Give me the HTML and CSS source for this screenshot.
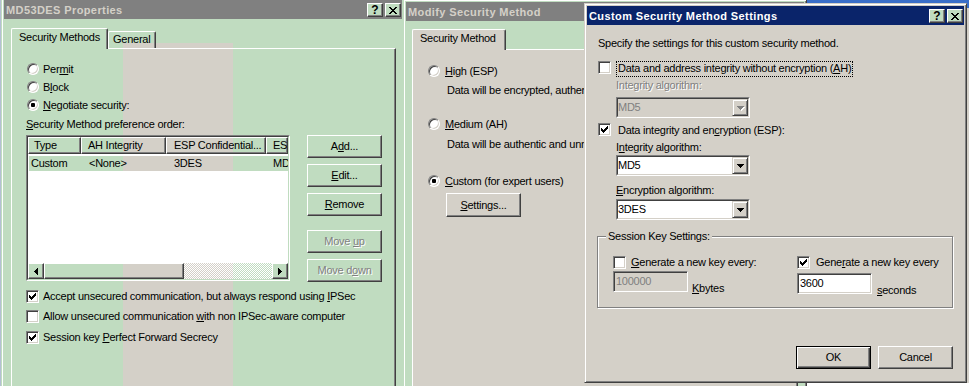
FILE: index.html
```html
<!DOCTYPE html>
<html lang="en">
<head>
<meta charset="utf-8">
<title>IPSec security method properties</title>
<link rel="stylesheet" href="styles.css">
</head>
<body>
<div class="desk">

  <div class="win w1">
    <div class="cap off">
      <span class="cap-t">MD53DES Properties</span>
      <span class="cap-b">
        <i class="tb">?</i>
        <i class="tb"><svg width="8" height="7" viewBox="0 0 8 7" shape-rendering="crispEdges"><path d="M0 0h2v1H0zM6 0h2v1H6zM1 1h2v1H1zM5 1h2v1H5zM2 2h4v1H2zM3 3h2v1H3zM2 4h4v1H2zM1 5h2v1H1zM5 5h2v1H5zM0 6h2v1H0zM6 6h2v1H6z"/></svg></i>
      </span>
    </div>
    <div class="body b1">
      <div class="tabs">
        <div class="tab sel t-sm">Security Methods</div>
        <div class="tab t-gen">General</div>
      </div>
      <div class="page p1">
        <div class="opt"><i class="rad"></i><span class="ol">Per<u>m</u>it</span></div>
        <div class="opt"><i class="rad"></i><span class="ol">B<u>l</u>ock</span></div>
        <div class="opt"><i class="rad on"></i><span class="ol"><u>N</u>egotiate security:</span></div>
        <div class="plabel"><u>S</u>ecurity Method preference order:</div>
        <div class="lvrow">
          <div class="lv">
            <div class="lv-in">
              <div class="lvh">
                <span class="hc h1">Type</span>
                <span class="hc h2">AH Integrity</span>
                <span class="hc h3">ESP Confidential...</span>
                <span class="hc h4">ESP Integrity</span>
              </div>
              <div class="lvr">
                <span class="rc r1">Custom</span>
                <span class="rc r2">&lt;None&gt;</span>
                <span class="rc r3">3DES</span>
                <span class="rc r4">MD5</span>
              </div>
              <div class="lvsp"></div>
              <div class="hsb">
                <i class="sbb"><svg width="4" height="7" viewBox="0 0 4 7" shape-rendering="crispEdges"><path d="M3 0h1v7H3zM2 1h1v5H2zM1 2h1v3H1zM0 3h1v1H0z"/></svg></i>
                <i class="thumb"></i>
                <i class="track"></i>
                <i class="sbb"><svg width="4" height="7" viewBox="0 0 4 7" shape-rendering="crispEdges"><path d="M0 0h1v7H0zM1 1h1v5H1zM2 2h1v3H2zM3 3h1v1H3z"/></svg></i>
              </div>
            </div>
          </div>
          <div class="btncol">
            <div class="btn"><span>A<u>d</u>d...</span></div>
            <div class="btn mt6"><span><u>E</u>dit...</span></div>
            <div class="btn mt6"><span><u>R</u>emove</span></div>
            <div class="btn dis mt14"><span>Move <u>u</u>p</span></div>
            <div class="btn dis mt6"><span>Move d<u>o</u>wn</span></div>
          </div>
        </div>
        <div class="chk k1"><i class="cb"><svg width="7" height="7" viewBox="0 0 7 7" shape-rendering="crispEdges"><path d="M6 0h1v1H6zM5 1h2v1H5zM0 2h1v1H0zM4 2h3v1H4zM0 3h2v1H0zM3 3h3v1H3zM0 4h5v1H0zM1 5h3v1H1zM2 6h1v1H2z"/></svg></i><span class="cl">Accept unsecured communication, but always respond using <u>I</u>PSec</span></div>
        <div class="chk k2"><i class="cb"></i><span class="cl">Allow unsecured communication <u>w</u>ith non IPSec-aware computer</span></div>
        <div class="chk k3"><i class="cb"><svg width="7" height="7" viewBox="0 0 7 7" shape-rendering="crispEdges"><path d="M6 0h1v1H6zM5 1h2v1H5zM0 2h1v1H0zM4 2h3v1H4zM0 3h2v1H0zM3 3h3v1H3zM0 4h5v1H0zM1 5h3v1H1zM2 6h1v1H2z"/></svg></i><span class="cl">Session key <u>P</u>erfect Forward Secrecy</span></div>
      </div>
    </div>
  </div>

  <div class="win w2">
    <div class="cap off">
      <span class="cap-t">Modify Security Method</span>
      <span class="cap-b">
        <i class="tb">?</i>
        <i class="tb"><svg width="8" height="7" viewBox="0 0 8 7" shape-rendering="crispEdges"><path d="M0 0h2v1H0zM6 0h2v1H6zM1 1h2v1H1zM5 1h2v1H5zM2 2h4v1H2zM3 3h2v1H3zM2 4h4v1H2zM1 5h2v1H1zM5 5h2v1H5zM0 6h2v1H0zM6 6h2v1H6z"/></svg></i>
      </span>
    </div>
    <div class="body b2">
      <div class="tabs">
        <div class="tab sel t-sec">Security Method</div>
      </div>
      <div class="page p2">
        <div class="opt"><i class="rad"></i><span class="ol"><u>H</u>igh (ESP)</span></div>
        <div class="desc d1">Data will be encrypted, authenticated and unmodified.</div>
        <div class="opt o-med"><i class="rad"></i><span class="ol"><u>M</u>edium (AH)</span></div>
        <div class="desc d2">Data will be authentic and unmodified, but will not be encrypted.</div>
        <div class="opt o-cus"><i class="rad on"></i><span class="ol"><u>C</u>ustom (for expert users)</span></div>
        <div class="btn set"><span><u>S</u>ettings...</span></div>
      </div>
    </div>
  </div>

  <div class="win w3">
    <div class="cap on">
      <span class="cap-t">Custom Security Method Settings</span>
      <span class="cap-b">
        <i class="tb">?</i>
        <i class="tb"><svg width="8" height="7" viewBox="0 0 8 7" shape-rendering="crispEdges"><path d="M0 0h2v1H0zM6 0h2v1H6zM1 1h2v1H1zM5 1h2v1H5zM2 2h4v1H2zM3 3h2v1H3zM2 4h4v1H2zM1 5h2v1H1zM5 5h2v1H5zM0 6h2v1H0zM6 6h2v1H6z"/></svg></i>
      </span>
    </div>
    <div class="client">
      <div class="t">Specify the settings for this custom security method.</div>
      <div class="chk ah"><i class="cb"></i><span class="lab focus">Data and address integrity without encryption (<u>A</u>H)</span></div>
      <div class="t dis ind ia">Integrity algorithm:</div>
      <div class="combo dis ind cmb-d">
        <div class="combo-in"><span class="cv">MD5</span><i class="dd"><svg width="7" height="4" viewBox="0 0 7 4" shape-rendering="crispEdges"><path d="M0 0h7v1H0zM1 1h5v1H1zM2 2h3v1H2zM3 3h1v1H3z"/></svg></i></div>
      </div>
      <div class="chk esp"><i class="cb"><svg width="7" height="7" viewBox="0 0 7 7" shape-rendering="crispEdges"><path d="M6 0h1v1H6zM5 1h2v1H5zM0 2h1v1H0zM4 2h3v1H4zM0 3h2v1H0zM3 3h3v1H3zM0 4h5v1H0zM1 5h3v1H1zM2 6h1v1H2z"/></svg></i><span class="lab">Data integrity and en<u>c</u>ryption (ESP):</span></div>
      <div class="t ind ia2">I<u>n</u>tegrity algorithm:</div>
      <div class="combo ind cmb1">
        <div class="combo-in"><span class="cv">MD5</span><i class="dd"><svg width="7" height="4" viewBox="0 0 7 4" shape-rendering="crispEdges"><path d="M0 0h7v1H0zM1 1h5v1H1zM2 2h3v1H2zM3 3h1v1H3z"/></svg></i></div>
      </div>
      <div class="t ind ea"><u>E</u>ncryption algorithm:</div>
      <div class="combo ind cmb2">
        <div class="combo-in"><span class="cv">3DES</span><i class="dd"><svg width="7" height="4" viewBox="0 0 7 4" shape-rendering="crispEdges"><path d="M0 0h7v1H0zM1 1h5v1H1zM2 2h3v1H2zM3 3h1v1H3z"/></svg></i></div>
      </div>
      <fieldset class="grp">
        <legend>Session Key Settings:</legend>
        <div class="ggrid">
          <div class="gc">
            <div class="chk"><i class="cb"></i><span class="gl"><u>G</u>enerate a new key every:</span></div>
            <div class="tbrow tb1"><div class="tbox dis">100000</div><span class="unit"><u>K</u>bytes</span></div>
          </div>
          <div class="gc">
            <div class="chk"><i class="cb"><svg width="7" height="7" viewBox="0 0 7 7" shape-rendering="crispEdges"><path d="M6 0h1v1H6zM5 1h2v1H5zM0 2h1v1H0zM4 2h3v1H4zM0 3h2v1H0zM3 3h3v1H3zM0 4h5v1H0zM1 5h3v1H1zM2 6h1v1H2z"/></svg></i><span class="gl gl2">Gene<u>r</u>ate a new key every</span></div>
            <div class="tbrow tb2"><div class="tbox">3600</div><span class="unit u2"><u>s</u>econds</span></div>
          </div>
        </div>
      </fieldset>
      <div class="okrow">
        <div class="btn def"><span>OK</span></div>
        <div class="btn"><span>Cancel</span></div>
      </div>
    </div>
  </div>

</div>
</body>
</html>
```

FILE: styles.css
```css
:root {
  --g: #c0dcc0;
  --s: #d4d0c8;
  --band: linear-gradient(#c0dcc0, #c0dcc0) 0 0 / 100% 43px no-repeat fixed,
          linear-gradient(90deg, #c0dcc0 123px, #d4d0c8 123px, #d4d0c8 233px, #c0dcc0 233px) fixed;
}

* { box-sizing: border-box; }

html, body { margin: 0; padding: 0; }

body {
  font-family: "Liberation Sans", Arial, sans-serif;
  font-size: 11px;
  line-height: 13px;
  letter-spacing: -0.25px;
  color: #000;
  background: #3a6ec8;
}

u { text-decoration-thickness: 1px; text-underline-offset: 1px; }

.desk {
  position: relative;
  width: 969px;
  height: 386px;
  overflow: hidden;
  background:
    linear-gradient(#fff, #fff) 807px 383px / 162px 3px no-repeat,
    linear-gradient(#d4d0c8, #d4d0c8) 967px 8px / 2px 378px no-repeat,
    linear-gradient(#b4bfd4, #b4bfd4) 0 0 / 1px 386px no-repeat,
    #3a6ec8;
}

/* ---------- windows ---------- */
.win {
  position: absolute;
  display: flex;
  flex-direction: column;
  border: 1px solid;
  padding: 2px;
  box-shadow: inset 1px 1px #fff, inset -1px -1px #808080;
}
.w1 { left: 1px; top: -3px; width: 404px; height: 400px; background: var(--g); border-color: var(--g) #404040 #404040 var(--g); }
.w2 { left: 403px; top: -1px; width: 404px; height: 400px; background: var(--g); border-color: var(--g) #404040 #404040 var(--g); }
.w3 { left: 584px; top: 3px; width: 383px; height: 380px; background: var(--s); border-color: var(--s) #404040 #404040 var(--s); }

.cap {
  flex: none;
  height: 19px;
  display: flex;
  font-weight: bold;
  letter-spacing: 0.4px;
}
.cap.off { background: #808080; color: #d4d0c8; }
.cap.on { background: #0a246a; color: #fff; }
.cap-t { flex: 1; padding: 2px 0 0 2px; line-height: 16px; white-space: nowrap; overflow: hidden; }
.cap-b { display: flex; gap: 2px; padding: 3px 1px 0 0; }
.tb {
  width: 16px;
  height: 14px;
  display: flex;
  align-items: center;
  justify-content: center;
  background: var(--g);
  border: 1px solid;
  border-color: #fff #404040 #404040 #fff;
  box-shadow: inset -1px -1px #808080;
  color: #000;
  font-style: normal;
  font-weight: bold;
  font-size: 12px;
  line-height: 12px;
  letter-spacing: 0;
}

.body { flex: 1; display: flex; flex-direction: column; min-height: 0; }
.b1 { padding: 9px 6px 0 7px; background: var(--band); }
.b2 { padding: 8px 6px 0 6px; }

/* ---------- tabs ---------- */
.tabs {
  flex: none;
  display: flex;
  align-items: flex-end;
  height: 21px;
  margin-bottom: -1px;
  position: relative;
  z-index: 1;
}
.tab {
  height: 17px;
  margin-bottom: 1px;
  border: 1px solid;
  border-bottom: 0;
  border-color: #fff #404040 #404040 #fff;
  border-radius: 2px 2px 0 0;
  box-shadow: inset -1px 0 #808080;
  padding: 1px 0 0 4px;
  white-space: nowrap;
}
.tab.sel { height: 21px; margin-bottom: 0; padding: 2px 0 0 7px; }
.t-sm { width: 97px; background: var(--g); }
.t-gen { width: 48px; }
.t-sec { width: 94px; background: var(--s); padding-left: 8px; }

.page {
  flex: 1;
  border: 1px solid;
  border-color: #fff #404040 #404040 #fff;
  box-shadow: inset -1px -1px #808080;
}
.p1 { padding: 14px 0 0 14px; }
.p2 { padding: 15px 0 0 15px; background: var(--s); }

/* ---------- radio / check ---------- */
.opt { display: flex; align-items: flex-start; height: 13px; }
.p1 .opt { margin-left: 1px; }
.p1 .opt + .opt { margin-top: 5px; }
.rad {
  flex: none;
  width: 12px;
  height: 12px;
  border-radius: 50%;
  border: 1px solid;
  border-color: #808080 #fff #fff #808080;
  box-shadow: inset 1px 1px #404040, inset -1px -1px var(--s);
  background: #fff;
  display: flex;
  align-items: center;
  justify-content: center;
}
.rad.on::after { content: ""; width: 4px; height: 4px; border-radius: 1px; background: #000; }
.ol { margin-left: 4px; white-space: nowrap; }
.p2 .ol { margin-left: 5px; }

.chk { display: flex; align-items: flex-start; }
.cb {
  flex: none;
  width: 13px;
  height: 13px;
  border: 1px solid;
  border-color: #808080 #fff #fff #808080;
  box-shadow: inset 1px 1px #404040, inset -1px -1px var(--s);
  background: #fff;
  display: flex;
  align-items: center;
  justify-content: center;
}
.cl { margin-left: 4px; white-space: nowrap; }
.k1 { margin-top: 8px; }
.k2 { margin-top: 7px; }
.k3 { margin-top: 8px; }

.plabel { margin-top: 6px; white-space: nowrap; }

/* ---------- list view ---------- */
.lvrow { display: flex; gap: 17px; margin-top: 4px; }
.lv {
  flex: none;
  width: 264px;
  height: 146px;
  border: 1px solid;
  border-color: #808080 #fff #fff #808080;
}
.lv-in {
  height: 100%;
  display: flex;
  flex-direction: column;
  border: 1px solid;
  border-color: #404040 var(--g) var(--g) #404040;
  background: #fff;
  overflow: hidden;
}
.lvh { flex: none; display: flex; height: 17px; }
.hc {
  flex: none;
  border: 1px solid;
  border-color: #fff #404040 #404040 #fff;
  box-shadow: inset -1px -1px #808080;
  background: var(--band);
  line-height: 15px;
  white-space: nowrap;
  overflow: hidden;
}
.h1 { width: 53px; padding-left: 5px; }
.h2 { width: 85px; padding-left: 6px; }
.h3 { width: 100px; padding-left: 7px; }
.h4 { flex: 1; padding-left: 6px; }

.lvr {
  flex: none;
  display: flex;
  height: 15px;
  margin: 2px 0 0 1px;
  background: var(--band);
  line-height: 15px;
  white-space: nowrap;
}
.rc { flex: none; overflow: hidden; }
.r1 { width: 52px; padding-left: 2px; }
.r2 { width: 85px; padding-left: 8px; }
.r3 { width: 100px; padding-left: 8px; }
.r4 { flex: 1; padding-left: 7px; }
.lvsp { flex: 1; }

.hsb { flex: none; display: flex; height: 16px; }
.sbb, .thumb {
  flex: none;
  height: 16px;
  border: 1px solid;
  border-color: #fff #404040 #404040 #fff;
  box-shadow: inset -1px -1px #808080;
}
.sbb { width: 16px; display: flex; align-items: center; justify-content: center; background: var(--g); }
.thumb { width: 140px; background: var(--band); }
.track {
  flex: 1;
  background: repeating-conic-gradient(#fff 0 25%, transparent 0 50%) 0 0 / 2px 2px, var(--band);
}

/* ---------- buttons ---------- */
.btncol { display: flex; flex-direction: column; }
.btn {
  flex: none;
  width: 75px;
  height: 23px;
  display: flex;
  align-items: center;
  justify-content: center;
  border: 1px solid;
  border-color: #fff #404040 #404040 #fff;
  box-shadow: inset -1px -1px #808080;
  white-space: nowrap;
}
.b1 .btn { background: var(--g); }
.w3 .btn { background: var(--s); }
.btn.dis { color: #808080; text-shadow: 1px 1px #fff; }
.btn.def {
  border-color: #000;
  box-shadow: inset 1px 1px #fff, inset -1px -1px #404040, inset -2px -2px #808080;
}
.mt6 { margin-top: 6px; }
.mt14 { margin-top: 14px; }

/* ---------- window 2 ---------- */
.desc { margin-left: 19px; white-space: nowrap; }
.d1 { margin-top: 6px; }
.o-med { margin-top: 21px; }
.d2 { margin-top: 7px; }
.o-cus { margin-top: 24px; }
.set { margin: 5px 0 0 18px; height: 24px; background: var(--s); }

/* ---------- window 3 ---------- */
.client {
  flex: 1;
  display: flex;
  flex-direction: column;
  align-items: flex-start;
  padding: 12px 11px 0 11px;
}
.t { white-space: nowrap; }
.dis { color: #808080; }
.t.dis { text-shadow: 1px 1px #fff; }
.ind { margin-left: 18px; }
.ah { margin-top: 11px; }
.lab { margin-left: 5px; border: 1px solid transparent; padding: 0 1px 1px; white-space: nowrap; }
.lab.focus { border: 1px dotted #000; }
.ia { margin-top: 2px; }
.cmb-d { margin-top: 5px; }
.esp { margin-top: 5px; }
.ia2 { margin-top: 2px; }
.cmb1 { margin-top: 1px; }
.ea { margin-top: 8px; }
.cmb2 { margin-top: 2px; }

.combo {
  width: 134px;
  height: 21px;
  display: flex;
  border: 1px solid;
  border-color: #808080 #fff #fff #808080;
}
.combo-in {
  flex: 1;
  display: flex;
  border: 1px solid;
  border-color: #404040 var(--s) var(--s) #404040;
  background: #fff;
}
.cv { flex: 1; line-height: 17px; }
.dd {
  flex: none;
  width: 16px;
  display: flex;
  align-items: center;
  justify-content: center;
  background: var(--s);
  border: 1px solid;
  border-color: var(--s) #404040 #404040 var(--s);
  box-shadow: inset 1px 1px #fff, inset -1px -1px #808080;
}
.combo.dis .combo-in { background: var(--s); }
.combo.dis svg { fill: #808080; filter: drop-shadow(1px 1px 0 #fff); }

.grp {
  margin: 10px 0 0 -1px;
  width: 356px;
  min-width: 0;
  border: 1px solid #808080;
  box-shadow: inset 1px 1px #fff, 1px 1px #fff;
  padding: 0 0 13px 0;
}
.grp legend {
  margin-left: 8px;
  padding: 0 2px;
  line-height: 13px;
  background: var(--s);
  white-space: nowrap;
}
.ggrid {
  display: grid;
  grid-template-columns: 184px auto;
  margin: 13px 0 0 15px;
}
.gl { margin-left: 5px; white-space: nowrap; }
.gl2 { margin-left: 6px; }
.tbrow { display: flex; align-items: flex-end; }
.tb1 { margin-top: 2px; }
.tb2 { margin-top: 4px; }
.tbox {
  width: 75px;
  height: 21px;
  border: 1px solid;
  border-color: #808080 #fff #fff #808080;
  box-shadow: inset 1px 1px #404040, inset -1px -1px var(--s);
  background: #fff;
  padding: 3px 2px 0 2px;
}
.tbox.dis { background: var(--s); }
.unit { margin: 0 0 -3px 4px; white-space: nowrap; }
.u2 { margin-left: 5px; }

.okrow {
  align-self: stretch;
  display: flex;
  justify-content: flex-end;
  gap: 7px;
  margin-top: 38px;
}
```
